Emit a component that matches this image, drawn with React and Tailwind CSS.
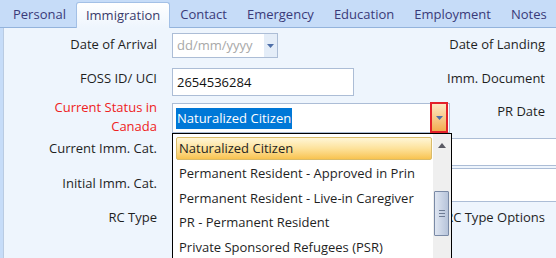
import React from "react";

const tabs = ["Personal", "Immigration", "Contact", "Emergency", "Education", "Employment", "Notes"];

function Label({ children, className = "" }) {
  return (
    <div className={"w-[157px] shrink-0 text-right text-[#1f1f1f] " + className}>{children}</div>
  );
}

export default function App() {
  const items = [
    "Permanent Resident - Approved in Prin",
    "Permanent Resident - Live-in Caregiver",
    "PR - Permanent Resident",
    "Private Sponsored Refugees (PSR)",
  ];
  return (
    <div
      className="relative w-[556px] h-[258px] overflow-hidden bg-[#c6dcf8] text-[13px] leading-[19px]"
      style={{ fontFamily: '"Open Sans", "Noto Sans", sans-serif' }}
    >
      {/* tab strip */}
      <div className="flex h-[28px] pl-[3px] border-b border-[#93b3dc] items-end">
        {tabs.map((t) => (
          <div
            key={t}
            className={
              t === "Immigration"
                ? "relative -mb-px h-[26px] px-[9px] pt-[3px] rounded-t-[3px] border border-b-0 border-[#a3c0e6] bg-gradient-to-b from-[#ffffff] to-[#eef5fd] text-[#3a3a6a]"
                : "h-[25px] px-[10px] pt-[3px] text-[#3a3a78]"
            }
          >
            {t}
          </div>
        ))}
      </div>

      {/* content panel */}
      <div className="ml-[3px] h-[230px] bg-[#eef5fd] border-l border-[#b9cbe2] flex flex-col">
        {/* Row 1 */}
        <div className="flex mt-[5px] h-[25px] -ml-[4px]">
          <Label className="pt-[2px]">Date of Arrival</Label>
          <div className="ml-[15px] w-[106px] h-[25px] flex border border-[#acbdd6] bg-white">
            <div className="flex-1 pl-[4px] pt-[2px] text-[#a8a8a8]">dd/mm/yyyy</div>
            <div className="w-[13px] bg-[#e4edf8] flex items-center justify-center">
              <svg width="7" height="4" viewBox="0 0 7 4"><path d="M0 0h7L3.5 4z" fill="#4e6fa8" /></svg>
            </div>
          </div>
          <div className="flex-1 text-right pr-[11px] pt-[2px] text-[#1f1f1f]">Date of Landing</div>
        </div>
        {/* Row 2 */}
        <div className="flex mt-[10px] h-[28px] -ml-[4px]">
          <Label className="pt-[1px]">FOSS ID/ UCI</Label>
          <div className="ml-[15px] w-[182px] h-[28px] border border-[#acbdd6] bg-white pl-[4px] pt-[4px] text-[#111]">
            2654536284
          </div>
          <div className="flex-1 text-right pr-[11px] pt-[1px] text-[#1f1f1f]">Imm. Document</div>
        </div>
        {/* Row 3 */}
        <div className="flex mt-[7px] h-[30px] -ml-[4px]">
          <Label className="-mt-[5px] text-[#ee2222]">
            Current Status in
            <br />
            Canada
          </Label>
          <div className="ml-[15px] w-[278px] h-[30px] flex items-center border border-[#acbdd6] bg-white pl-[3px]">
            <span className="bg-[#0078d7] text-white px-[1px] leading-[21px]">Naturalized Citizen</span>
            <div className="ml-auto mr-[1px] w-[18px] h-[31px] -mt-px border-2 border-[#e3202a] bg-gradient-to-b from-[#fde7c2] to-[#f2ad4e] flex items-center justify-center">
              <svg width="7" height="4" viewBox="0 0 7 4"><path d="M0 0h7L3.5 4z" fill="#4e6fa8" /></svg>
            </div>
          </div>
          <div className="flex-1 text-right pr-[11px] -mt-px text-[#1f1f1f]">PR Date</div>
        </div>
        {/* Row 4 */}
        <div className="flex mt-[5px] h-[28px] -ml-[4px]">
          <Label className="pt-[1px]">Current Imm. Cat.</Label>
          <div className="ml-[15px] flex-1 h-[28px] border-y border-l border-[#acbdd6] bg-white"></div>
        </div>
        {/* Row 5 */}
        <div className="flex mt-[2px] h-[34px] -ml-[4px]">
          <Label className="pt-[6px]">Initial Imm. Cat.</Label>
          <div className="ml-[15px] flex-1 h-[34px] border-y border-l border-[#acbdd6] bg-white"></div>
        </div>
        {/* Row 6 */}
        <div className="flex mt-[6px] h-[22px] -ml-[4px]">
          <Label>RC Type</Label>
          <div className="flex-1 text-right pr-[11px] text-[#1f1f1f]">RC Type Options</div>
        </div>
      </div>

      {/* dropdown list overlay */}
      <div className="absolute left-[172px] top-[133px] w-[280px] h-[130px] bg-white border border-black flex">
        <div className="flex-1 pt-[3px] pl-[3px] pr-[1px] text-[#1f1f1f]">
          <div className="h-[23px] rounded-[2px] border border-[#d9bb6a] bg-gradient-to-b from-[#fff6d6] via-[#fde29a] to-[#f8c34e] pl-[2px] pt-[1px] whitespace-nowrap">
            Naturalized Citizen
          </div>
          {items.map((it) => (
            <div key={it} className="h-[24.5px] pl-[3px] pt-[4px] whitespace-nowrap overflow-hidden">
              {it}
            </div>
          ))}
        </div>
        <div className="w-[18px] bg-[#efefef] relative flex flex-col items-center">
          <svg className="mt-[9px]" width="8" height="5" viewBox="0 0 8 5"><path d="M0 5h8L4 0z" fill="#5a5a64" /></svg>
          <div className="absolute left-[1px] top-[57px] w-[15px] h-[45px] border border-[#7a8aa6] rounded-[1px] bg-gradient-to-r from-[#dfe6f2] to-[#b7c4da] flex flex-col items-center justify-center gap-[2px]">
            <div className="w-[6px] h-px bg-[#6e7c94]" />
            <div className="w-[6px] h-px bg-[#6e7c94]" />
            <div className="w-[6px] h-px bg-[#6e7c94]" />
          </div>
        </div>
      </div>
    </div>
  );
}
